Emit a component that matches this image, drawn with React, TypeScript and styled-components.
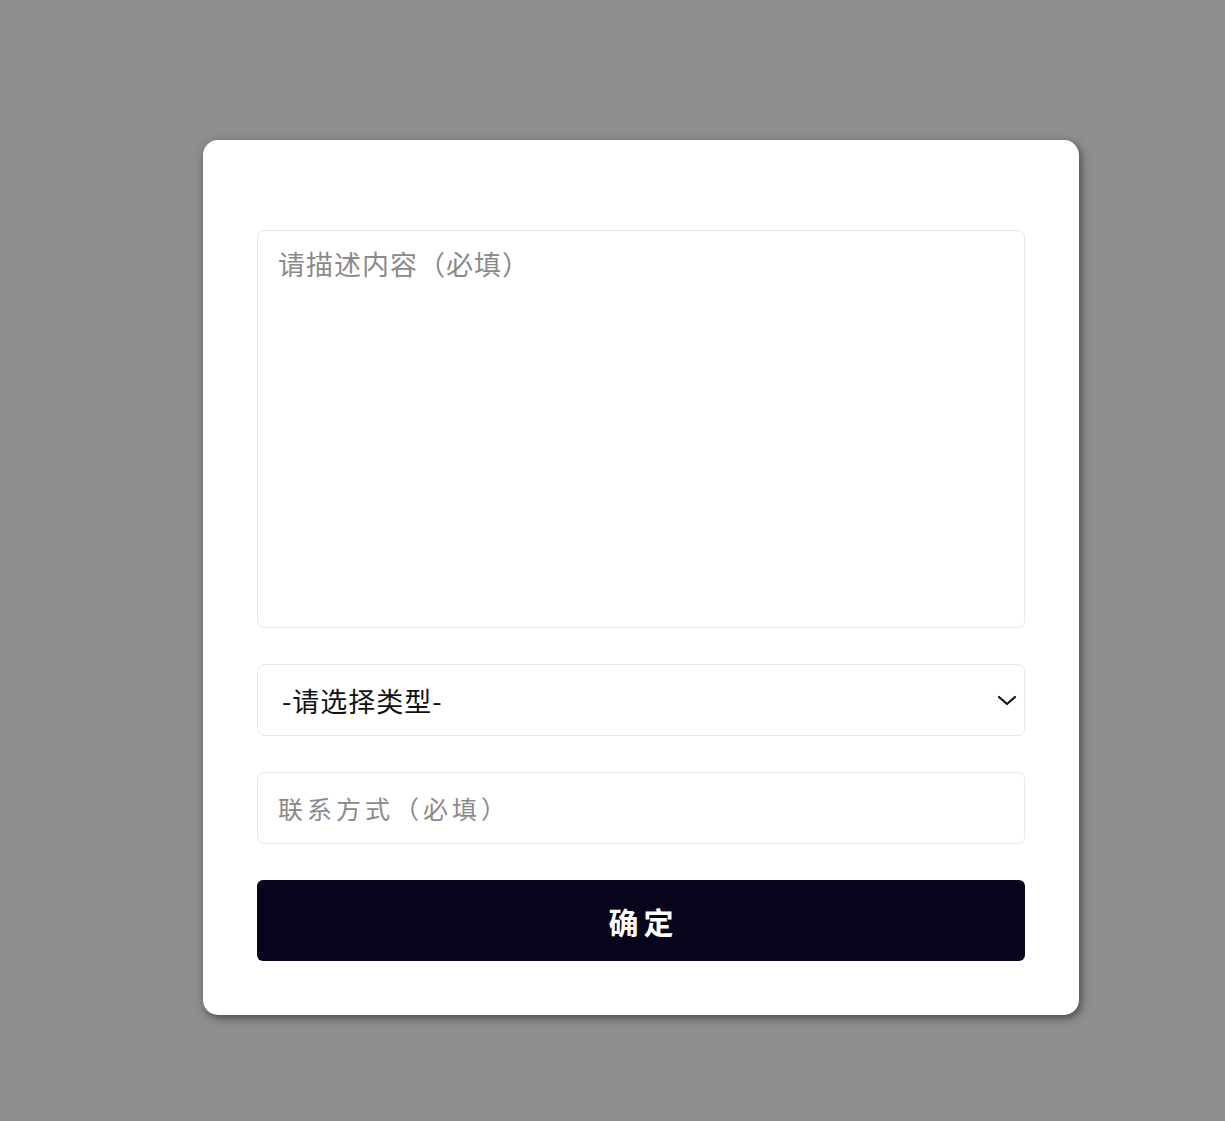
import React from "react";
import styled, { createGlobalStyle } from "styled-components";

const Global = createGlobalStyle`
  html, body { margin: 0; padding: 0; }
  body {
    background: #8e8e8e;
    font-family: "Noto Sans CJK SC", "Noto Sans", sans-serif;
  }
  * { box-sizing: border-box; }
`;

const Page = styled.div`
  min-height: 1121px;
  padding: 140px 0 0 203px;
`;

const Card = styled.form`
  width: 876px;
  height: 875px;
  background: #ffffff;
  border-radius: 15px;
  box-shadow: 2px 3px 9px rgba(0, 0, 0, 0.5);
  padding: 90px 54px 54px;
  display: flex;
  flex-direction: column;
  gap: 36px;
`;

const fieldBase = `
  width: 100%;
  border: 1px solid #e9e6f6;
  border-radius: 7px;
  background: #fff;
  font-family: "Noto Sans CJK SC", sans-serif;
  outline: none;
`;

const TextArea = styled.textarea`
  ${fieldBase}
  height: 398px;
  resize: none;
  padding: 14px 20px;
  font-size: 27px;
  letter-spacing: 1px;
  line-height: 1.4;
  color: #333;
  &::placeholder { color: #8a8a8a; }
`;

const SelectWrap = styled.div`
  position: relative;
  height: 72px;
`;

const Select = styled.select`
  ${fieldBase}
  height: 72px;
  appearance: none;
  padding: 0 24px;
  font-size: 27px;
  letter-spacing: 1px;
  color: #111;
`;

const Chevron = styled.svg`
  position: absolute;
  right: 8px;
  top: 27px;
  width: 20px;
  height: 18px;
  pointer-events: none;
`;

const Input = styled.input`
  ${fieldBase}
  height: 72px;
  padding: 0 20px;
  font-size: 25px;
  letter-spacing: 4px;
  color: #333;
  &::placeholder { color: #8a8a8a; }
`;

const Button = styled.button`
  height: 81px;
  border: none;
  border-radius: 6px;
  background: #07051c;
  color: #fff;
  font-family: "Noto Sans CJK SC", sans-serif;
  font-size: 30px;
  font-weight: 700;
  letter-spacing: 5px;
  text-indent: 5px;
  cursor: pointer;
`;

export default function App() {
  return (
    <>
      <Global />
      <Page>
        <Card onSubmit={(e) => e.preventDefault()}>
          <TextArea placeholder="请描述内容（必填）" />
          <SelectWrap>
            <Select defaultValue="">
              <option value="">-请选择类型-</option>
            </Select>
            <Chevron viewBox="0 0 20 18" fill="none">
              <path d="M2 6 L10 13 L18 6" stroke="#111" strokeWidth="2.2" strokeLinecap="round" strokeLinejoin="round" />
            </Chevron>
          </SelectWrap>
          <Input placeholder="联系方式（必填）" />
          <Button type="submit">确定</Button>
        </Card>
      </Page>
    </>
  );
}
